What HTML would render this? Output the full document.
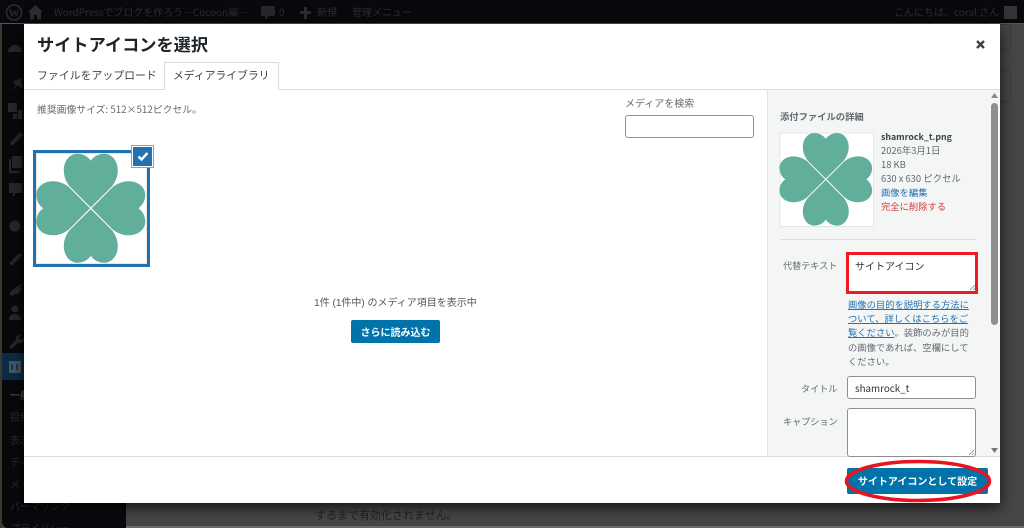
<!DOCTYPE html>
<html lang="ja"><head><meta charset="utf-8"><title>サイトアイコンを選択</title>
<style>
html,body{margin:0;padding:0;width:1024px;height:528px;overflow:hidden;background:#464646}
body{position:relative;font-family:"Noto Sans CJK JP","Liberation Sans",sans-serif;color:#444}
#w{position:absolute;left:0;top:0;width:1024px;height:528px;overflow:hidden;filter:blur(.3px)}
.a{position:absolute;white-space:nowrap;display:block}
.t{line-height:14px}
#modal{position:absolute;left:24px;top:24px;width:976px;height:479px;background:#fff;box-shadow:0 4px 14px rgba(0,0,0,.75)}
.dim{color:#2a2c30;font-size:10px;line-height:14px}
.box{position:absolute;background:#fff;border:1px solid #8c8f94;border-radius:3px;box-sizing:border-box}
svg{display:block}
</style></head><body><div id="w">
<div class="a" style="left:0;top:0;width:2px;height:528px;background:#3b3a2c"></div>
<div class="a" style="left:2px;top:0;width:124px;height:528px;background:#08090d;border-bottom-left-radius:6px"></div>
<div class="a" style="left:2px;top:353px;width:124px;height:27px;background:#0a2d45"></div>
<div class="a" style="left:0;top:0;width:1024px;height:23px;background:#08090c"></div>
<div class="a" style="left:0;top:23px;width:1024px;height:1px;background:#555"></div>
<div class="a" style="left:1000px;top:24px;width:10px;height:24px;border:1px solid #3c3c3c;border-left:0;border-radius:0 3px 3px 0"></div>
<div class="a" style="left:1000px;top:70px;width:10px;height:30px;border:1px solid #3c3c3c;border-left:0;border-radius:0 3px 3px 0"></div>

<svg class="a" style="left:0;top:0" width="1024" height="528" viewBox="0 0 1024 528">
 <circle cx="14" cy="12.500" r="7.500" fill="none" stroke="#2b2d31" stroke-width="1.600"/>
 <text x="14" y="16.500" text-anchor="middle" font-family="Liberation Serif" font-weight="700" font-size="11" fill="#2b2d31">W</text>
 <g fill="#26282c">
  <path d="M43 12 L35.500 5 L28 12 L30 12 L30 19.500 L34 19.500 L34 15 L37 15 L37 19.500 L41 19.500 L41 12Z" fill="#2b2d31"/>
  <path d="M263 6h10a2 2 0 0 1 2 2v6a2 2 0 0 1-2 2h-4l-4 4v-4h-2a2 2 0 0 1-2-2V8a2 2 0 0 1 2-2z"/>
  <path d="M304 7h3v4h4v3h-4v5h-3v-5h-4v-3h4z" fill="#2b2d31"/>
  <rect x="1004" y="6" width="13" height="13" fill="#343434"/>
  <path d="M8 52a7 7 0 1 1 14 0z"/>
  <path d="M11 91l5-6-3-3 2-2 1 1 4-3 2 2-1 4 2 2-2 2-3-3z"/>
  <path d="M8 103h9v9H8zM18 110h4v9h-4zM13 114h4v5h-4z"/>
  <path d="M10 143l10-11 3 3-11 11z"/>
  <path d="M12 156h10v12H12z"/><path d="M9 159h2v12h9v2H9z"/>
  <path d="M9 183h13v10h-6l-3 4v-4H9z"/>
  <circle cx="15" cy="226" r="5.500"/>
  <path d="M9 263l3-2 3-4 5-4 2 2-4 5-4 3-2 3z"/>
  <path d="M9 294l3-3-1-1 3-1 3-3 1 1 3-3 1 1-2 3 2 1-2 1 1 1-3 3-3 0-3 2z"/>
  <circle cx="15" cy="309" r="3.500"/><path d="M9 320c0-5 3-6 6-6s6 1 6 6z"/>
  <path d="M9 347l7-7c-1-3 2-6 5-5l-2 3 2 2 3-2c0 4-3 6-6 5l-7 6z"/>
 </g>
 <rect x="9" y="361" width="12" height="12" fill="#4a5a65"/>
 <path d="M12 364v6M17 364v6" stroke="#0a2d45" stroke-width="1.500"/>
</svg>
<div class="a t" style="left:54px;top:5px;font-size:9.950px;color:#2b2d31">WordPressでブログを作ろう―Cocoon編―</div>
<div class="a t" style="left:279px;top:5px;font-size:10px;color:#2b2d31">0</div>
<div class="a t" style="left:317px;top:5px;font-size:10px;color:#2b2d31">新規</div>
<div class="a t" style="left:352px;top:5px;font-size:10px;color:#2b2d31">管理メニュー</div>
<div class="a t" style="left:894px;top:5px;font-size:10px;color:#2b2d31">こんにちは、coral さん</div>

<div class="a dim" style="left:10px;top:388px;font-weight:700;color:#45474c">一般</div>
<div class="a dim" style="left:10px;top:410px">投稿</div>
<div class="a dim" style="left:10px;top:433px">表示</div>
<div class="a dim" style="left:10px;top:455px">ディ</div>
<div class="a dim" style="left:10px;top:477px">メ</div>
<div class="a dim" style="left:10px;top:499px">パーマリンク</div>
<div class="a dim" style="left:10px;top:521px">プライバシー</div>
<div class="a t" style="left:315px;top:508px;font-size:11px;color:#222">するまで有効化されません。</div>
<div class="a" style="left:126px;top:526px;width:898px;height:2px;background:#6a6a6a"></div>

<div id="modal"></div>
<div class="a" style="left:767px;top:90px;width:233px;height:366px;background:#f4f6f6;border-left:1px solid #e2e4e7;box-sizing:border-box"></div>
<div class="a" style="left:24px;top:89px;width:976px;height:1px;background:#dcdcde"></div>
<div class="a" style="left:24px;top:456px;width:976px;height:1px;background:#dcdcde"></div>

<div class="a" style="left:37px;top:32px;font-size:17.200px;line-height:24px;font-weight:700;color:#1d2327">サイトアイコンを選択</div>
<svg class="a" style="left:975px;top:39px" width="11" height="11" viewBox="0 0 11 11"><path d="M2 2l7 7M9 2l-7 7" stroke="#3c434a" stroke-width="2.400"/></svg>

<div class="a t" style="left:37px;top:68px;font-size:10.900px;color:#3c434a">ファイルをアップロード</div>
<div class="a" style="left:164px;top:62px;width:115px;height:28px;box-sizing:border-box;background:#fff;border:1px solid #dcdcde;border-bottom:0"></div>
<div class="a t" style="left:173px;top:68px;font-size:10.800px;color:#3c434a">メディアライブラリ</div>

<div class="a t" style="left:37px;top:102px;font-size:9.820px;color:#646970">推奨画像サイズ: 512×512ピクセル。</div>
<div class="a t" style="left:625px;top:96px;font-size:10px;color:#646970">メディアを検索</div>
<div class="box" style="left:625px;top:115px;width:129px;height:23px"></div>

<div class="a" style="left:33px;top:150px;width:117px;height:117px;box-sizing:border-box;border:3px solid #2271b1;background:#fff;box-shadow:inset 0 0 0 1px #e6e8ea"></div>
<svg class="a" style="left:0;top:0" width="1024" height="528" viewBox="0 0 1024 528">
 <defs><path id="h" d="M0,-.8L-21.300,-22C-25,-27 -27,-32 -27,-38C-27,-48 -20.500,-54.500 -13.500,-54.500C-7.500,-54.500 -2.500,-51.500 0,-47.500C2.500,-51.500 7.500,-54.500 13.500,-54.500C20.500,-54.500 27,-48 27,-38C27,-32 25,-27 21.300,-22Z" fill="#61af9a"/>
 <g id="c"><use href="#h"/><use href="#h" transform="rotate(90)"/><use href="#h" transform="rotate(180)"/><use href="#h" transform="rotate(270)"/></g></defs>
 <use href="#c" transform="translate(90.800 208.300)"/>
 <rect x="780" y="133" width="93.500" height="93.500" fill="#fff" stroke="#e4e6e8" stroke-width="1"/>
 <use href="#c" transform="translate(825.800 179.300) scale(.85)"/>
</svg>
<div class="a" style="left:132px;top:146px;width:21px;height:21px;box-sizing:border-box;background:#2271b1;border:1px solid #fff;box-shadow:0 0 0 1px #7ba6cc"></div>
<svg class="a" style="left:137px;top:151px" width="12" height="11" viewBox="0 0 12 11"><path d="M1.500 5.500l3 3 6-6.500" fill="none" stroke="#fff" stroke-width="2.400"/></svg>

<div class="a" style="left:24px;top:295px;width:743px;text-align:center;font-size:10px;line-height:14px;font-family:'Liberation Sans','Noto Sans CJK JP',sans-serif;color:#50575e;padding-top:2px">1件 (1件中) のメディア項目を表示中</div>
<div class="a" style="left:351px;top:320px;width:89px;height:23px;background:#0073aa;border-radius:2px;color:#fff;font-size:10px;font-weight:700;line-height:23px;text-align:center">さらに読み込む</div>

<div class="a t" style="left:780px;top:109px;font-size:9.300px;font-weight:700;color:#646970">添付ファイルの詳細</div>
<div class="a t" style="left:881px;top:130px;font-size:8.800px;font-weight:700;color:#3c434a">shamrock_t.png</div>
<div class="a t" style="left:881px;top:143px;font-size:9.400px;color:#646970">2026年3月1日</div>
<div class="a t" style="left:881px;top:157px;font-size:9.400px;color:#646970">18 KB</div>
<div class="a t" style="left:881px;top:171px;font-size:9.400px;color:#646970">630 x 630 ピクセル</div>
<div class="a t" style="left:881px;top:185px;font-size:9.300px;color:#2271b1">画像を編集</div>
<div class="a t" style="left:881px;top:199px;font-size:9.300px;color:#d63638">完全に削除する</div>
<div class="a" style="left:780px;top:239px;width:196px;height:1px;background:#dcdcde"></div>

<div class="a t" style="left:783px;top:258px;font-size:9.100px;color:#646970">代替テキスト</div>
<div class="a" style="left:846px;top:252px;width:132px;height:42px;box-sizing:border-box;background:#fff;border:3px solid #ed1c24"></div>
<div class="a t" style="left:855px;top:259px;font-size:10px;color:#2c3338">サイトアイコン</div>
<svg class="a" style="left:969px;top:284px" width="7" height="7" viewBox="0 0 7 7"><path d="M1 6l5-5M4 6l2-2" stroke="#888" stroke-width=".8"/></svg>

<div class="a" style="left:848px;top:297px;width:130px;font-size:9.300px;line-height:14.200px;color:#646970;white-space:nowrap"><span style="color:#2271b1;text-decoration:underline">画像の目的を説明する方法に<br>ついて、詳しくはこちらをご<br>覧ください</span>。装飾のみが目的<br>の画像であれば、空欄にして<br>ください。</div>

<div class="a t" style="left:801px;top:381px;font-size:9.100px;color:#646970">タイトル</div>
<div class="box" style="left:847px;top:376px;width:129px;height:23px"></div>
<div class="a t" style="left:855px;top:381px;font-size:9.800px;color:#2c3338">shamrock_t</div>
<div class="a t" style="left:783px;top:414px;font-size:9.100px;color:#646970">キャプション</div>
<div class="box" style="left:847px;top:408px;width:129px;height:49px"></div>
<svg class="a" style="left:968px;top:449px" width="7" height="7" viewBox="0 0 7 7"><path d="M1 6l5-5M4 6l2-2" stroke="#888" stroke-width=".8"/></svg>

<svg class="a" style="left:0;top:0" width="1024" height="528" viewBox="0 0 1024 528">
 <path d="M994.500 93l3.500 5h-7z" fill="#888"/>
 <rect x="991" y="103" width="7" height="222" rx="3.500" fill="#8f8f8f"/>
 <path d="M994.500 453l-3.500-5h7z" fill="#777"/>
</svg>

<div class="a" style="left:847px;top:468px;width:141px;height:26px;background:#0073aa;border-radius:2px;color:#fff;font-size:10px;font-weight:700;line-height:26px;text-align:center">サイトアイコンとして設定</div>
<svg class="a" style="left:0;top:0" width="1024" height="528" viewBox="0 0 1024 528"><ellipse cx="918" cy="481" rx="71.500" ry="19.500" fill="none" stroke="#e8141f" stroke-width="3.600"/></svg>
</div></body></html>
